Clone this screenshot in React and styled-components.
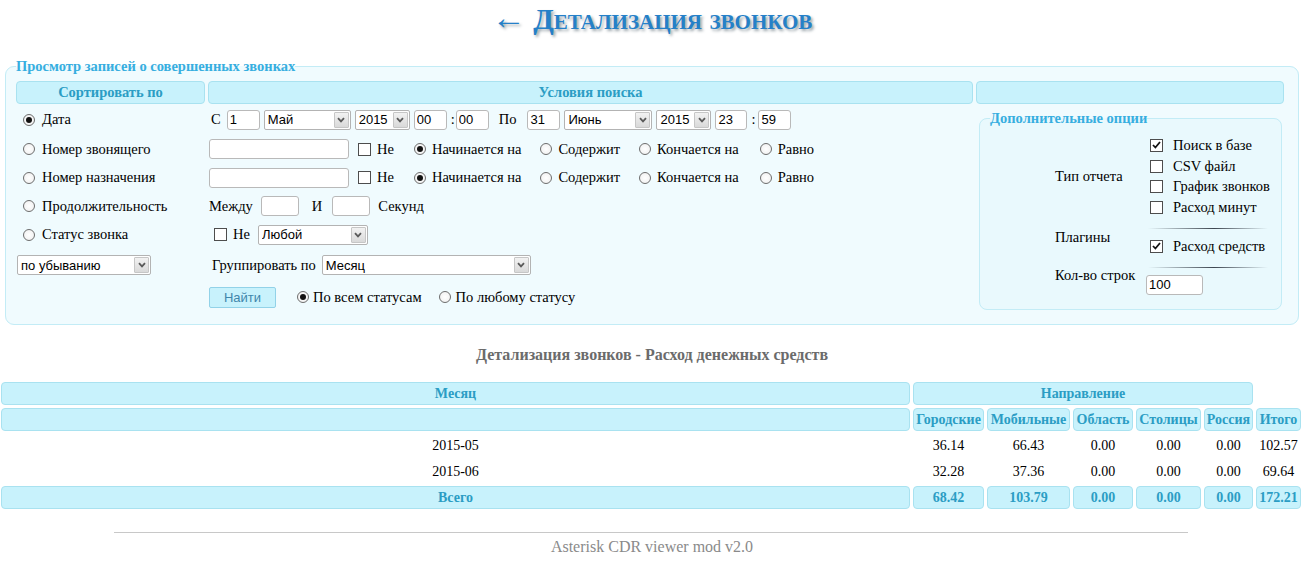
import styled, { createGlobalStyle } from "styled-components";

const GlobalStyle = createGlobalStyle`
  body {
    margin: 0;
    background: #fff;
    font-family: "Liberation Serif", "Times New Roman", serif;
    font-size: 14.5px;
    color: #000;
  }
`;

const Page = styled.div`
  width: 1304px;
`;

const Title = styled.h1`
  margin: 0;
  height: 40px;
  line-height: 38px;
  text-align: center;
  font-size: 30px;
  font-weight: bold;
  font-variant: small-caps;
  color: #2580c8;
  text-shadow: 2px 2px 3px #9aa4aa;
`;

const TitleArrow = styled.span`
  font-size: 34px;
  font-weight: normal;
  line-height: 0;
`;

const SearchBox = styled.fieldset`
  margin: 18px 5px 0;
  padding: 0 12px 11px 10px;
  border: 1px solid #c3ecf6;
  border-radius: 9px;
  background: #f0fbfe;
  min-width: 0;
`;

const Legend = styled.legend`
  padding: 0;
  font-size: 14.5px;
  font-weight: bold;
  line-height: 16px;
  color: #37aee0;
`;

const FormGrid = styled.div`
  display: grid;
  grid-template-columns: 189px 765px 308px;
  grid-template-rows: 23px 31px 28px 29px 28px 29px 32px 32px;
  column-gap: 3px;
  margin-top: 7px;
`;

const HeadCell = styled.div`
  display: flex;
  align-items: center;
  justify-content: center;
  background: #c8f2fc;
  border: 1px solid #a9e2f0;
  border-radius: 4px;
  font-size: 14.5px;
  font-weight: bold;
  color: #2b9dc4;
`;

const LeftCell = styled.div`
  grid-column: 1;
  display: flex;
  align-items: center;
  padding-left: ${(p) => p.$pad ?? 7}px;
`;

const MidCell = styled.div`
  grid-column: 2;
  display: flex;
  align-items: center;
  padding-left: ${(p) => p.$pad ?? 1}px;
  gap: ${(p) => p.$gap ?? 4}px;
`;

const Text = styled.span`
  white-space: nowrap;
  margin: ${(p) => p.$m || "0"};
`;

const Input = styled.input`
  box-sizing: border-box;
  width: ${(p) => p.$w}px;
  height: 20px;
  padding: 0 2px;
  border: 1px solid #b9b9b9;
  border-radius: 3px;
  background: #fff;
  font-family: "Liberation Sans", Arial, sans-serif;
  font-size: 13px;
  color: #000;
  outline: none;
  margin: ${(p) => p.$m || "0"};
`;

const SelectBox = styled.div`
  box-sizing: border-box;
  display: flex;
  align-items: center;
  width: ${(p) => p.$w}px;
  height: 20px;
  padding: 1px 1px 1px 3px;
  border: 1px solid #b3b3b3;
  border-radius: 2px;
  background: #fff;
  font-family: "Liberation Sans", Arial, sans-serif;
  font-size: 13px;
  margin: ${(p) => p.$m || "0"};
`;

const SelectValue = styled.span`
  flex: 1;
  white-space: nowrap;
  overflow: hidden;
`;

const Arrow = styled.span`
  box-sizing: border-box;
  display: flex;
  align-items: center;
  justify-content: center;
  width: 15px;
  height: 16px;
  border: 1px solid #c6c6c6;
  border-radius: 1px;
  background: linear-gradient(#f2f2f2, #d9d9d9);
`;

function Select({ value, w, m }) {
  return (
    <SelectBox $w={w} $m={m}>
      <SelectValue>{value}</SelectValue>
      <Arrow>
        <svg width="8" height="6" viewBox="0 0 8 6">
          <path d="M1 1.2 L4 4.4 L7 1.2" fill="none" stroke="#5a5a5a" strokeWidth="1.8" />
        </svg>
      </Arrow>
    </SelectBox>
  );
}

const Option = styled.label`
  display: inline-flex;
  align-items: center;
  gap: ${(p) => p.$gap ?? 6}px;
  white-space: nowrap;
  margin: ${(p) => p.$m || "0"};
`;

const RadioDot = styled.span`
  box-sizing: border-box;
  width: 12px;
  height: 12px;
  border-radius: 50%;
  border: 1px solid #6d6d6d;
  background: radial-gradient(circle, #fff 0%, #eee 100%);
  display: inline-flex;
  align-items: center;
  justify-content: center;
  flex-shrink: 0;

  &::after {
    content: "";
    width: 6px;
    height: 6px;
    border-radius: 50%;
    background: ${(p) => (p.$on ? "#111" : "transparent")};
  }
`;

const CheckBox = styled.span`
  box-sizing: border-box;
  width: 13px;
  height: 13px;
  border: 1px solid #4d4d4d;
  background: #fff;
  display: inline-flex;
  align-items: center;
  justify-content: center;
  flex-shrink: 0;
`;

function Radio({ on, children, m, gap }) {
  return (
    <Option $m={m} $gap={gap}>
      <RadioDot $on={on} />
      {children}
    </Option>
  );
}

function Check({ on, children, m, gap }) {
  return (
    <Option $m={m} $gap={gap}>
      <CheckBox>
        {on && (
          <svg width="9" height="8" viewBox="0 0 9 8">
            <path d="M1 4 L3.4 6.5 L8 1" fill="none" stroke="#111" strokeWidth="1.8" />
          </svg>
        )}
      </CheckBox>
      {children}
    </Option>
  );
}

const FindButton = styled.button`
  box-sizing: border-box;
  width: 67px;
  height: 21px;
  padding: 0;
  border: 1px solid #92d2e8;
  border-radius: 2px;
  background: #c8f2fc;
  font-family: "Liberation Sans", Arial, sans-serif;
  font-size: 13px;
  color: #3f86ab;
  margin-right: 21px;
`;

const OptionsCell = styled.div`
  grid-column: 3;
  grid-row: 2 / 9;
  display: flex;
`;

const OptionsBox = styled.fieldset`
  flex: 1;
  margin: 6px 2px 3px 3px;
  padding: 0 10px 0 10px;
  border: 1px solid #c3ecf6;
  border-radius: 8px;
  background: #e9f9fd;
  min-width: 0;
`;

const OptionsGrid = styled.div`
  display: grid;
  grid-template-columns: 90px 150px;
  margin: 9px 0 0 65px;
  align-items: center;
`;

const OptLabel = styled.div`
  white-space: nowrap;
  align-self: center;
`;

const OptList = styled.div`
  display: flex;
  flex-direction: column;
  padding-left: ${(p) => p.$pad ?? 5}px;
  line-height: 20.7px;
`;

const Divider = styled.div`
  height: 1px;
  width: 120px;
  margin: ${(p) => p.$m || "10px 0 7px -2px"};
  background: linear-gradient(90deg, rgba(60, 70, 80, 0), #3d4650 55%, rgba(60, 70, 80, 0));
`;

const Caption = styled.div`
  margin: 21px 0 0;
  line-height: 18px;
  text-align: center;
  font-size: 16px;
  font-weight: bold;
  color: #6b6b6b;
`;

const ResultGrid = styled.div`
  display: grid;
  grid-template-columns: 909px 71px 83px 60px 65px 49px 45px;
  grid-auto-rows: 23px;
  gap: 3px;
  margin: 18px 0 0 1px;
  font-size: 14px;
`;

const RCell = styled.div`
  box-sizing: border-box;
  display: flex;
  align-items: center;
  justify-content: center;
  white-space: nowrap;
  grid-column: ${(p) => p.$span || "auto"};
`;

const RHead = styled(RCell)`
  background: #c8f2fc;
  border: 1px solid #a9e2f0;
  border-radius: 4px;
  font-weight: bold;
  color: #2b9dc4;
`;

const Rule = styled.hr`
  width: 1074px;
  margin: 23px 0 0 114px;
  border: 0;
  border-top: 1px solid #c8c8c8;
  height: 0;
`;

const Footer = styled.div`
  text-align: center;
  margin-top: 5px;
  font-size: 16px;
  color: #8a8a8a;
`;

const rows = [
  ["2015-05", "36.14", "66.43", "0.00", "0.00", "0.00", "102.57"],
  ["2015-06", "32.28", "37.36", "0.00", "0.00", "0.00", "69.64"],
];
const total = ["Всего", "68.42", "103.79", "0.00", "0.00", "0.00", "172.21"];
const columns = ["Городские", "Мобильные", "Область", "Столицы", "Россия", "Итого"];

export default function App() {
  return (
    <Page>
      <GlobalStyle />
      <Title>
        <TitleArrow>←</TitleArrow> Детализация звонков
      </Title>

      <SearchBox>
        <Legend>Просмотр записей о совершенных звонках</Legend>
        <FormGrid>
          <HeadCell>Сортировать по</HeadCell>
          <HeadCell>Условия поиска</HeadCell>
          <HeadCell />

          <LeftCell>
            <Radio on gap={7}>Дата</Radio>
          </LeftCell>
          <MidCell $pad={3}>
            <Text $m="0 2px 0 0">С</Text>
            <Input $w={33} defaultValue="1" />
            <Select value="Май" w={87} />
            <Select value="2015" w={55} />
            <Input $w={33} defaultValue="00" />
            <Text $m="0 -3px 0 0">:</Text>
            <Input $w={33} defaultValue="00" />
            <Text $m="0 7px 0 6px">По</Text>
            <Input $w={33} defaultValue="31" />
            <Select value="Июнь" w={88} />
            <Select value="2015" w={55} />
            <Input $w={32} defaultValue="23" />
            <Text $m="0 -1px 0 0">:</Text>
            <Input $w={33} defaultValue="59" />
          </MidCell>

          <LeftCell>
            <Radio gap={7}>Номер звонящего</Radio>
          </LeftCell>
          <MidCell $gap={0}>
            <Input $w={140} $m="0 9px 0 0" />
            <Check m="0 20px 0 0">Не</Check>
            <Radio on m="0 19px 0 0">Начинается на</Radio>
            <Radio m="0 19px 0 0">Содержит</Radio>
            <Radio m="0 21px 0 0">Кончается на</Radio>
            <Radio>Равно</Radio>
          </MidCell>

          <LeftCell>
            <Radio gap={7}>Номер назначения</Radio>
          </LeftCell>
          <MidCell $gap={0}>
            <Input $w={140} $m="0 9px 0 0" />
            <Check m="0 20px 0 0">Не</Check>
            <Radio on m="0 19px 0 0">Начинается на</Radio>
            <Radio m="0 19px 0 0">Содержит</Radio>
            <Radio m="0 21px 0 0">Кончается на</Radio>
            <Radio>Равно</Radio>
          </MidCell>

          <LeftCell>
            <Radio gap={7}>Продолжительность</Radio>
          </LeftCell>
          <MidCell $gap={0}>
            <Text $m="0 8px 0 0">Между</Text>
            <Input $w={38} $m="0 13px 0 0" />
            <Text $m="0 10px 0 0">И</Text>
            <Input $w={38} $m="0 8px 0 0" />
            <Text>Секунд</Text>
          </MidCell>

          <LeftCell>
            <Radio gap={7}>Статус звонка</Radio>
          </LeftCell>
          <MidCell $pad={6} $gap={0}>
            <Check m="0 8px 0 0">Не</Check>
            <Select value="Любой" w={110} />
          </MidCell>

          <LeftCell $pad={1}>
            <Select value="по убыванию" w={134} />
          </LeftCell>
          <MidCell $pad={4} $gap={6}>
            <Text>Группировать по</Text>
            <Select value="Месяц" w={209} />
          </MidCell>

          <LeftCell />
          <MidCell $gap={0}>
            <FindButton type="button">Найти</FindButton>
            <Radio on gap={4} m="0 17px 0 0">По всем статусам</Radio>
            <Radio gap={5}>По любому статусу</Radio>
          </MidCell>

          <OptionsCell>
            <OptionsBox>
              <Legend>Дополнительные опции</Legend>
              <OptionsGrid>
                <OptLabel>Тип отчета</OptLabel>
                <OptList>
                  <Check on gap={10}>Поиск в базе</Check>
                  <Check gap={10}>CSV файл</Check>
                  <Check gap={10}>График звонков</Check>
                  <Check gap={10}>Расход минут</Check>
                </OptList>

                <OptLabel>Плагины</OptLabel>
                <OptList>
                  <Divider />
                  <Check on gap={10}>Расход средств</Check>
                </OptList>

                <OptLabel>Кол-во строк</OptLabel>
                <OptList $pad={1}>
                  <Divider $m="10px 0 7px 2px" />
                  <Input $w={57} defaultValue="100" />
                </OptList>
              </OptionsGrid>
            </OptionsBox>
          </OptionsCell>
        </FormGrid>
      </SearchBox>

      <Caption>Детализация звонков - Расход денежных средств</Caption>

      <ResultGrid>
        <RHead>Месяц</RHead>
        <RHead $span="2 / 7">Направление</RHead>
        <RCell />
        <RHead />
        {columns.map((c) => (
          <RHead key={c}>{c}</RHead>
        ))}
        {rows.map((r) =>
          r.map((v, i) => <RCell key={r[0] + i}>{v}</RCell>)
        )}
        {total.map((v, i) => (
          <RHead key={"t" + i}>{v}</RHead>
        ))}
      </ResultGrid>

      <Rule />
      <Footer>Asterisk CDR viewer mod v2.0</Footer>
    </Page>
  );
}
